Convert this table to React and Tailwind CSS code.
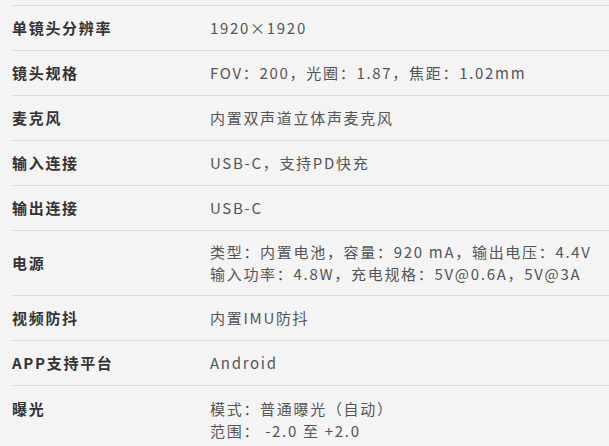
import React from 'react';

const rows = [
  { label: '单镜头分辨率', value: ['1920×1920'] },
  { label: '镜头规格', value: ['FOV：200，光圈：1.87，焦距：1.02mm'] },
  { label: '麦克风', value: ['内置双声道立体声麦克风'] },
  { label: '输入连接', value: ['USB-C，支持PD快充'] },
  { label: '输出连接', value: ['USB-C'] },
  { label: '电源', value: ['类型：内置电池，容量：920 mA，输出电压：4.4V', '输入功率：4.8W，充电规格：5V@0.6A，5V@3A'] },
  { label: '视频防抖', value: ['内置IMU防抖'] },
  { label: 'APP支持平台', value: ['Android'] },
];

export default function App() {
  return (
    <div className="min-h-[446px] bg-[#f4f4f4] pl-3 pt-[5px] font-['Noto_Sans_CJK_SC','Noto_Sans',sans-serif] overflow-hidden">
      {rows.map((row) => (
        <div
          key={row.label}
          className={`flex items-center border-t border-[#dcdcdc] ${row.value.length > 1 ? 'h-[65px]' : 'h-[45px]'}`}
        >
          <div className="w-[198px] shrink-0 text-[15px] font-bold tracking-[1.7px] text-[#333]">{row.label}</div>
          <div className="text-[15px] leading-[22px] tracking-[1.7px] text-[#555]">
            {row.value.map((line) => (
              <div key={line}>{line}</div>
            ))}
          </div>
        </div>
      ))}

      {/* last row runs past the bottom edge */}
      <div className="flex items-start border-t border-[#dcdcdc] pt-3 pb-4">
        <div className="w-[198px] shrink-0 text-[15px] leading-[22px] font-bold tracking-[1.7px] text-[#333]">曝光</div>
        <div className="text-[15px] leading-[22px] tracking-[1.7px] text-[#555]">
          <div>模式：普通曝光（自动）</div>
          <div>范围： -2.0 至 +2.0</div>
        </div>
      </div>
    </div>
  );
}
